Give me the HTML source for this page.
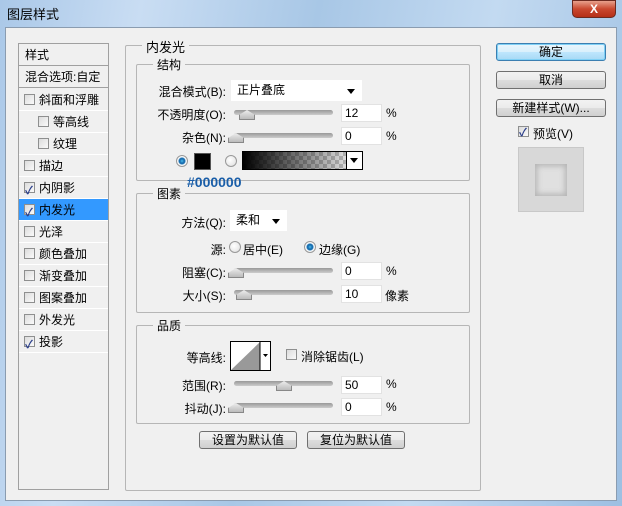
<!DOCTYPE html>
<html><head><meta charset="utf-8"><style>
*{margin:0;padding:0;box-sizing:border-box}
body{width:622px;height:506px;overflow:hidden;position:relative;font-family:"Liberation Sans","Noto Sans CJK SC","WenQuanYi Zen Hei",sans-serif;font-size:12px;color:#000;background:linear-gradient(100deg,#aac8e8 0%,#c9ddf3 20%,#a8c7e6 45%,#c3daf1 70%,#9dbfe2 100%)}
.a{position:absolute}
.client{position:absolute;left:5px;top:27px;width:612px;height:474px;background:#f0f0f0;border:1px solid #8a9cb0}
.title{left:7px;top:4px;font-size:13px}
.close{left:572px;top:0;width:44px;height:18px;border-radius:0 0 5px 5px;background:linear-gradient(#e8a08c,#c9482f 50%,#b52f17);border:1px solid #6b2a20;color:#fff;font-weight:bold;text-align:center;font-size:12px;line-height:16px}
.list{left:18px;top:43px;width:91px;height:447px;border:1px solid #a0a0a0;background:#f0f0f0}
.row{position:absolute;left:0;width:89px;height:22px;border-bottom:1px solid #fff;line-height:22px;padding-left:20px}
.cb{position:absolute;width:11px;height:11px;border:1px solid #8e8f8f;background:linear-gradient(135deg,#dcdcdc,#fafafa)}
.row .cb{left:5px;top:5px}
.chk::after{content:"✓";position:absolute;left:0;top:-3px;font-size:11px;color:#2a3e8a;font-weight:bold}
.grp{position:absolute;border:1px solid #b6b6b6;border-radius:2px}
.gl{position:absolute;top:-9px;background:#f0f0f0;padding:0 4px;left:16px}
.lbl{position:absolute;text-align:right;width:100px}
.inp{position:absolute;width:41px;height:18px;background:#fff;border:1px solid #e2e2e2;padding-left:3px;line-height:17px}
.sl{position:absolute;width:99px;height:5px;border-radius:3px;background:linear-gradient(#999,#ccc);}
.th{position:absolute;top:0;width:0;height:0}
.th::before{content:"";position:absolute;left:-7px;top:0;width:14px;height:9px;background:linear-gradient(#eee,#bbb);border:1px solid #888;border-top:none;clip-path:polygon(50% 0,100% 50%,100% 100%,0 100%,0 50%)}
.dd{position:absolute;background:#fff;padding-left:6px;line-height:20px}
.dd::after{content:"";position:absolute;right:7px;top:9px;border:4px solid transparent;border-top:5px solid #000}
.rad{position:absolute;width:12px;height:12px;border-radius:50%;border:1px solid #999;background:radial-gradient(circle at 40% 40%,#fff,#ddd)}
.rad.on{background:radial-gradient(circle,#4ac0f0 0,#1a6fb0 2px,#1a6fb0 3px,#fff 4px,#e6e6e6 6px)}
.btn{position:absolute;height:18px;border:1px solid #707070;border-radius:3px;background:linear-gradient(#f2f2f2 0,#ebebeb 50%,#dddddd 51%,#cfcfcf);text-align:center;line-height:16px}
</style></head><body>
<div class="a title">图层样式</div>
<div class="a close">X</div>
<div class="client"></div>

<div class="a list">
 <div class="row" style="top:0;padding-left:6px;border-bottom:1px solid #a0a0a0">样式</div>
 <div class="row" style="top:22px;padding-left:6px;border-bottom:1px solid #a0a0a0">混合选项:自定</div>
 <div class="row" style="top:45px"><span class="cb"></span>斜面和浮雕</div>
 <div class="row" style="top:67px;padding-left:34px"><span class="cb" style="left:19px"></span>等高线</div>
 <div class="row" style="top:89px;padding-left:34px"><span class="cb" style="left:19px"></span>纹理</div>
 <div class="row" style="top:111px"><span class="cb"></span>描边</div>
 <div class="row" style="top:133px"><span class="cb chk"></span>内阴影</div>
 <div class="row" style="top:155px;background:#3399ff"><span class="cb chk"></span>内发光</div>
 <div class="row" style="top:177px"><span class="cb"></span>光泽</div>
 <div class="row" style="top:199px"><span class="cb"></span>颜色叠加</div>
 <div class="row" style="top:221px"><span class="cb"></span>渐变叠加</div>
 <div class="row" style="top:243px"><span class="cb"></span>图案叠加</div>
 <div class="row" style="top:265px"><span class="cb"></span>外发光</div>
 <div class="row" style="top:287px"><span class="cb chk"></span>投影</div>
</div>

<div class="grp" style="left:125px;top:45px;width:356px;height:446px"><span class="gl" style="font-size:13px">内发光</span></div>
<div class="grp" style="left:136px;top:64px;width:334px;height:117px"><span class="gl">结构</span></div>
<div class="grp" style="left:136px;top:193px;width:334px;height:120px"><span class="gl">图素</span></div>
<div class="grp" style="left:136px;top:325px;width:334px;height:99px"><span class="gl">品质</span></div>

<div class="lbl" style="left:126px;top:83px">混合模式(B):</div>
<div class="dd" style="left:231px;top:80px;width:131px;height:21px">正片叠底</div>
<div class="lbl" style="left:126px;top:106px">不透明度(O):</div>
<div class="sl" style="left:234px;top:110px"><div class="th" style="left:12px"></div></div>
<div class="inp" style="left:341px;top:104px">12</div><div class="a" style="left:386px;top:106px">%</div>
<div class="lbl" style="left:126px;top:129px">杂色(N):</div>
<div class="sl" style="left:234px;top:133px"><div class="th" style="left:1px"></div></div>
<div class="inp" style="left:341px;top:127px">0</div><div class="a" style="left:386px;top:129px">%</div>
<div class="rad on" style="left:176px;top:155px"></div>
<div class="a" style="left:194px;top:153px;width:17px;height:17px;background:#000;border:1px solid #555"></div>
<div class="rad" style="left:225px;top:155px"></div>
<div class="a" style="left:242px;top:151px;width:121px;height:19px;border:1px solid #000;background:linear-gradient(90deg,#000,rgba(0,0,0,0)),repeating-conic-gradient(#ccc 0 25%,#fff 0 50%) 0 0/8px 8px"></div>
<div class="a" style="left:346px;top:152px;width:16px;height:17px;background:#fff;border-left:1px solid #000"></div>
<div class="a" style="left:350px;top:158px;border:4px solid transparent;border-top:5px solid #000"></div>
<div class="a" style="left:187px;top:174px;color:#1a5ea8;font-size:14px;font-weight:bold">#000000</div>

<div class="lbl" style="left:126px;top:214px">方法(Q):</div>
<div class="dd" style="left:230px;top:210px;width:57px;height:21px">柔和</div>
<div class="lbl" style="left:126px;top:241px">源:</div>
<div class="rad" style="left:229px;top:241px"></div><div class="a" style="left:243px;top:241px">居中(E)</div>
<div class="rad on" style="left:304px;top:241px"></div><div class="a" style="left:319px;top:241px">边缘(G)</div>
<div class="lbl" style="left:126px;top:264px">阻塞(C):</div>
<div class="sl" style="left:234px;top:268px"><div class="th" style="left:1px"></div></div>
<div class="inp" style="left:341px;top:262px">0</div><div class="a" style="left:386px;top:264px">%</div>
<div class="lbl" style="left:126px;top:287px">大小(S):</div>
<div class="sl" style="left:234px;top:290px"><div class="th" style="left:9px"></div></div>
<div class="inp" style="left:341px;top:285px">10</div><div class="a" style="left:385px;top:287px">像素</div>

<div class="lbl" style="left:126px;top:349px">等高线:</div>
<div class="a" style="left:230px;top:341px;width:41px;height:30px;border:1px solid #000;background:#fff">
<svg width="39" height="28" style="position:absolute;left:0;top:0"><polygon points="0,28 29,0 29,28" fill="#999"/><line x1="29" y1="0" x2="29" y2="28" stroke="#000"/><polygon points="32,12 37,12 34.5,15" fill="#000"/></svg></div>
<div class="cb" style="left:286px;top:349px"></div><div class="a" style="left:301px;top:348px">消除锯齿(L)</div>
<div class="lbl" style="left:126px;top:377px">范围(R):</div>
<div class="sl" style="left:234px;top:381px"><div class="th" style="left:49px"></div></div>
<div class="inp" style="left:341px;top:376px">50</div><div class="a" style="left:386px;top:377px">%</div>
<div class="lbl" style="left:126px;top:400px">抖动(J):</div>
<div class="sl" style="left:234px;top:403px"><div class="th" style="left:1px"></div></div>
<div class="inp" style="left:341px;top:398px">0</div><div class="a" style="left:386px;top:400px">%</div>

<div class="btn" style="left:199px;top:431px;width:98px">设置为默认值</div>
<div class="btn" style="left:307px;top:431px;width:98px">复位为默认值</div>

<div class="btn" style="left:496px;top:43px;width:110px;border-color:#3c7fb1;background:linear-gradient(#eaf6fd,#d9f0fc 50%,#bee6fd 51%,#a7d9f5);box-shadow:0 0 0 1px #7fd0f5 inset">确定</div>
<div class="btn" style="left:496px;top:71px;width:110px">取消</div>
<div class="btn" style="left:496px;top:99px;width:110px">新建样式(W)...</div>
<div class="cb chk" style="left:518px;top:126px"></div><div class="a" style="left:533px;top:125px">预览(V)</div>
<div class="a" style="left:518px;top:147px;width:66px;height:65px;background:#d8d8d8;border:1px solid #c8c8c8"></div>
<div class="a" style="left:535px;top:164px;width:32px;height:32px;background:#e0e0e0;box-shadow:inset 0 0 6px 2px #b5b5b5"></div>
</body></html>
